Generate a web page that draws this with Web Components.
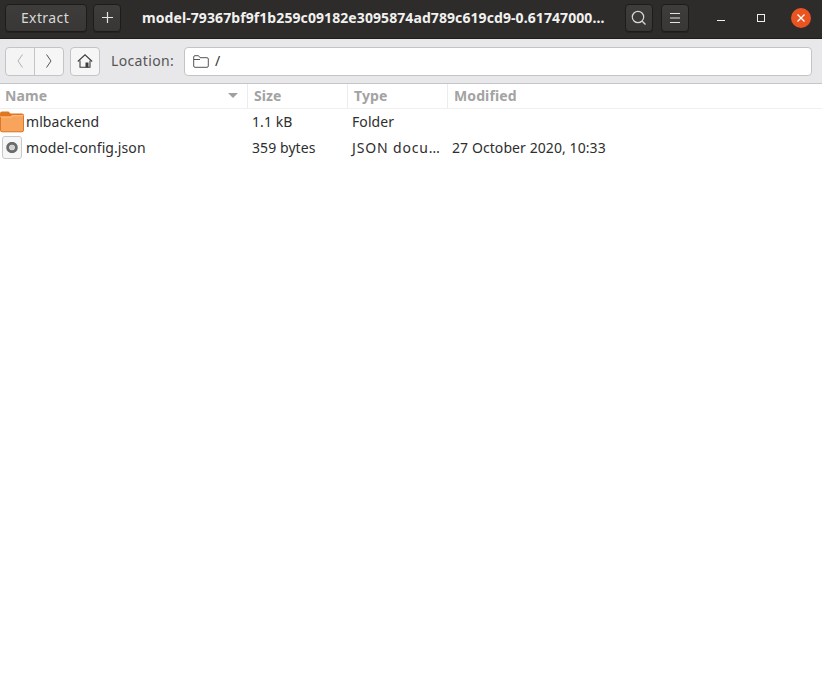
<!DOCTYPE html>
<html><head><meta charset="utf-8"><title>Archive Manager</title>
<style>
html,body{margin:0;height:100%;background:#fff}
body{font-family:"Noto Sans","Open Sans",sans-serif;font-size:14px;overflow:hidden}
</style></head><body>
<app-window>
<header-bar></header-bar>
<location-bar></location-bar>
<file-list></file-list>
</app-window>
<script>
function def(name,html){
  customElements.define(name,class extends HTMLElement{
    constructor(){super();this.attachShadow({mode:'open'}).innerHTML=html;}
  });
}
def('app-window',`<style>:host{display:flex;flex-direction:column;width:822px;height:683px;background:#fff;color:#3d3d3d}</style><slot></slot>`);
def('hb-button',`<style>
:host{display:flex;flex:none;align-items:center;justify-content:center;height:28px;box-sizing:border-box;border:1px solid #1d1c1b;border-radius:4px;background:linear-gradient(#3e3d3c,#383736);color:#d8d8d6;box-shadow:0 1px 0 #242322;font-size:14px;letter-spacing:.4px;padding-bottom:1px}
svg{display:block}
</style><slot></slot>`);
def('header-bar',`<style>
:host{display:flex;align-items:center;height:39px;box-sizing:border-box;background:#2d2c2b;padding:0 1px 2px 5px;border-bottom:1px solid #1f1e1d;flex:none}
.title{flex:none;width:470px;margin-left:20px;color:#f1f1ef;font-weight:700;font-size:14px;letter-spacing:.085px;white-space:nowrap;overflow:hidden;line-height:20px}
hb-button.ex{width:82px;margin-right:7px;padding-right:2px}
hb-button.sq{width:28px}
.right{display:flex;margin-left:14px;gap:8px}
.wc{display:flex;align-items:center;margin-left:auto}
.wc span{display:flex;width:40px;height:24px;align-items:center;justify-content:center}
.close{width:20px;height:20px;border-radius:50%;background:#e95420;display:flex;align-items:center;justify-content:center}
</style>
<hb-button class="ex">Extract</hb-button>
<hb-button class="sq" style="margin-left:-1px"><svg width="13" height="13" viewBox="0 0 13 13"><path d="M6.500 1v11M1 6.500h11" stroke="#e4e4e2" stroke-width="1.200" fill="none"/></svg></hb-button>
<div class="title" style="margin-left:21px">model-79367bf9f1b259c09182e3095874ad789c619cd9-0.61747000...</div>
<div class="right" style="margin-left:13px">
<hb-button class="sq"><svg width="16" height="16" viewBox="0 0 16 16"><circle cx="7" cy="7" r="5.700" stroke="#d8d8d6" stroke-width="1.200" fill="none"/><path d="M11.200 11.200l3.300 3.300" stroke="#d8d8d6" stroke-width="1.300"/></svg></hb-button>
<hb-button class="sq"><svg width="12" height="12" viewBox="0 0 12 12"><path d="M1 1.500h10M1 6h10M1 10.500h10" stroke="#e4e4e2" stroke-width="1" fill="none"/></svg></hb-button>
</div>
<div class="wc">
<span><svg width="10" height="10" viewBox="0 0 10 10"><path d="M1 7.500h8" stroke="#eee" stroke-width="1"/></svg></span>
<span><svg width="10" height="10" viewBox="0 0 10 10"><rect x="1.500" y="1.500" width="7" height="7" stroke="#eee" stroke-width="1" fill="none"/></svg></span>
<span><div class="close"><svg width="10" height="10" viewBox="0 0 10 10"><path d="M1.500 1.500l7 7M8.500 1.500l-7 7" stroke="#fff" stroke-width="1.300"/></svg></div></span>
</div>`);
def('location-bar',`<style>
:host{display:flex;align-items:center;height:45px;box-sizing:border-box;background:#e8e8ea;border-bottom:1px solid #c6c6c8;padding:0 10px 0 5px;flex:none}
.btn{display:flex;align-items:center;justify-content:center;flex:none;width:30px;height:29px;box-sizing:border-box;border:1px solid #c4c4c4;background:#f6f6f6}
.l{border-radius:4px 0 0 4px;background:#f4f4f4}
.r{border-radius:0 4px 4px 0;border-left:1px solid #c4c4c4;width:30px;margin-left:-1px}
.home{border-radius:4px;margin-left:6px;width:30px}
.lab{margin-left:11px;color:#555;width:73px;font-size:14px;letter-spacing:.35px;padding-bottom:2px;flex:none}
.entry{flex:1;height:29px;box-sizing:border-box;border:1px solid #c4c4c6;border-radius:4px;background:#fff;display:flex;align-items:center;padding-left:8px;gap:5px;color:#333}
.entry span{padding-bottom:2px;margin-left:1px}
svg{display:block}
</style>
<div class="btn l"><svg width="10" height="16" viewBox="0 0 10 16"><path d="M7.500 1.500L3 8l4.500 6.500" stroke="#b0b0b0" stroke-width="1" fill="none"/></svg></div>
<div class="btn r"><svg width="10" height="16" viewBox="0 0 10 16"><path d="M2.500 1.500L7 8l-4.500 6.500" stroke="#555" stroke-width="1" fill="none"/></svg></div>
<div class="btn home"><svg width="16" height="16" viewBox="0 0 16 16"><path d="M.8 8.500L8 1.800l7.200 6.700" stroke="#3d3d3d" stroke-width="1.100" fill="none"/><path d="M3 7.500v6.800h10V7.500" stroke="#3d3d3d" stroke-width="1.100" fill="none"/><rect x="8.500" y="9.500" width="3" height="5" fill="#3d3d3d"/></svg></div>
<div class="lab">Location:</div>
<div class="entry"><svg width="16" height="13" viewBox="0 0 16 13"><path d="M.7 11V2A1.300 1.300 0 0 1 2 .7h3.500l1.500 2h7a1.300 1.300 0 0 1 1.300 1.300v7a1.300 1.300 0 0 1-1.300 1.300H2A1.300 1.300 0 0 1 .7 11zM.7 4.500H7" stroke="#555" stroke-width="1" fill="none"/></svg><span>/</span></div>`);
def('col-head',`<style>
:host{display:flex;align-items:center;box-sizing:border-box;height:100%;font-weight:700;color:#a3a3a3;font-size:14px;letter-spacing:.1px;border-right:1px solid #ececec;padding:0 0 2px 6px}
</style><slot></slot>`);
def('file-row',`<style>
:host{display:grid;grid-template-columns:26px 226px 100px 100px 1fr;height:26px;box-sizing:border-box;padding-bottom:2px;align-items:center;color:#2e2e2e;font-size:14px;letter-spacing:.08px;white-space:nowrap}
.ic{display:flex;align-items:center}
</style><div class="ic"><slot name="icon"></slot></div><slot></slot>`);
def('file-list',`<style>
:host{display:block;flex:1;background:#fff}
.h{display:grid;grid-template-columns:248px 100px 100px 1fr;height:25px;border-bottom:1px solid #efefef;box-sizing:border-box}
.n{padding-left:5px}
.arrow{margin-left:auto;margin-right:9px;width:0;height:0;border-left:5px solid transparent;border-right:5px solid transparent;border-top:5px solid #a0a0a0}
</style>
<div class="h"><col-head class="n">Name<span class="arrow"></span></col-head><col-head>Size</col-head><col-head>Type</col-head><col-head style="border:none">Modified</col-head></div>
<file-row><svg slot="icon" width="25" height="24" viewBox="0 0 25 24"><path d="M0 4.500A2 2 0 0 1 2 2.500h6.500l2 2H22a2 2 0 0 1 2 2V10H0z" fill="#e0761f"/><path d="M0 7.500h10.500l2-1.500H24v15a2 2 0 0 1-2 2H2a2 2 0 0 1-2-2z" fill="#f9a45c"/><path d="M0 7.500h10.500l2-1.500H24v1.200H13l-2 1.500H0z" fill="#fbb880"/><path d="M.5 21v-13M23.500 6.500V21a1.800 1.800 0 0 1-1.800 1.800H2.300A1.800 1.800 0 0 1 .5 21" stroke="#d9772a" stroke-width="1" fill="none"/></svg><span>mlbackend</span><span>1.1 kB</span><span>Folder</span><span></span></file-row>
<file-row><svg slot="icon" width="24" height="24" viewBox="0 0 24 24"><defs><filter id="b"><feGaussianBlur stdDeviation=".6"/></filter></defs><rect x="2.500" y="1.500" width="19" height="22" rx="2.500" fill="#f6f6f6" stroke="#c8c8c8"/><g filter="url(#b)"><circle cx="12" cy="12.500" r="4.300" fill="none" stroke="#6a6a6a" stroke-width="3"/><circle cx="12" cy="12.500" r="2.400" fill="#cfcfcf"/></g></svg><span>model-config.json</span><span>359 bytes</span><span style="letter-spacing:.85px">JSON docu…</span><span>27 October 2020, 10:33</span></file-row>`);
</script>
</body></html>
